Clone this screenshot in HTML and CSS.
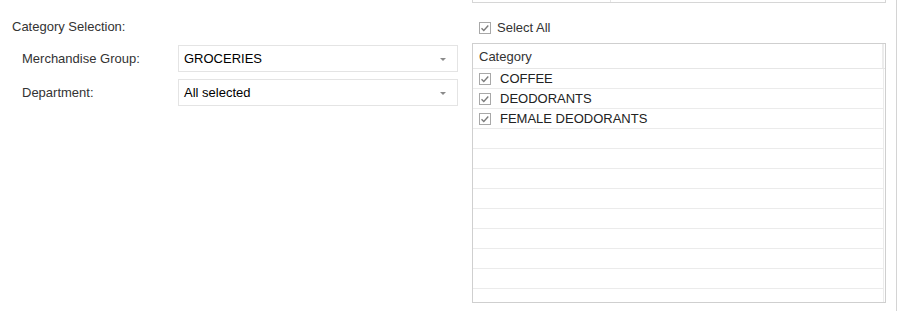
FILE: index.html
```html
<!DOCTYPE html>
<html>
<head>
<meta charset="utf-8">
<link rel="stylesheet" href="styles.css">
</head>
<body>
<div class="page">
  <section class="left">
    <div class="section-title">Category Selection:</div>
    <div class="field">
      <label class="field-label">Merchandise Group:</label>
      <div class="combo"><span class="combo-text">GROCERIES</span><span class="combo-arrow"></span></div>
    </div>
    <div class="field">
      <label class="field-label">Department:</label>
      <div class="combo"><span class="combo-text">All selected</span><span class="combo-arrow"></span></div>
    </div>
  </section>
  <section class="right">
    <div class="top-box"><div class="top-cell"></div><div class="top-cell last"></div></div>
    <div class="select-all">
      <span class="chk"><svg viewBox="0 0 12 12" width="12" height="12"><path d="M2.5 6.2 L4.8 8.4 L9.3 3.6" fill="none" stroke="#7b7b7b" stroke-width="1.4"/></svg></span>
      <span class="select-all-text">Select All</span>
    </div>
    <div class="grid">
      <div class="grid-header"><div class="col-head">Category</div></div>
      <div class="grid-body">
        <div class="row"><div class="cell"><span class="chk"><svg viewBox="0 0 12 12" width="12" height="12"><path d="M2.5 6.2 L4.8 8.4 L9.3 3.6" fill="none" stroke="#7b7b7b" stroke-width="1.4"/></svg></span><span class="cell-text">COFFEE</span></div></div>
        <div class="row"><div class="cell"><span class="chk"><svg viewBox="0 0 12 12" width="12" height="12"><path d="M2.5 6.2 L4.8 8.4 L9.3 3.6" fill="none" stroke="#7b7b7b" stroke-width="1.4"/></svg></span><span class="cell-text">DEODORANTS</span></div></div>
        <div class="row"><div class="cell"><span class="chk"><svg viewBox="0 0 12 12" width="12" height="12"><path d="M2.5 6.2 L4.8 8.4 L9.3 3.6" fill="none" stroke="#7b7b7b" stroke-width="1.4"/></svg></span><span class="cell-text">FEMALE DEODORANTS</span></div></div>
        <div class="row"><div class="cell"></div></div>
        <div class="row"><div class="cell"></div></div>
        <div class="row"><div class="cell"></div></div>
        <div class="row"><div class="cell"></div></div>
        <div class="row"><div class="cell"></div></div>
        <div class="row"><div class="cell"></div></div>
        <div class="row"><div class="cell"></div></div>
        <div class="row"><div class="cell"></div></div>
        <div class="row"><div class="cell"></div></div>
      </div>
    </div>
  </section>
  <div class="edge"></div>
</div>
</body>
</html>
```

FILE: styles.css
```css
html, body {
  margin: 0;
  padding: 0;
  background: #ffffff;
}
body {
  font-family: "Liberation Sans", Arial, sans-serif;
  font-size: 13px;
  color: #333333;
}
.page {
  display: flex;
  width: 902px;
  height: 311px;
  overflow: hidden;
}
.left {
  width: 472px;
  flex: none;
  padding-left: 12px;
  box-sizing: border-box;
}
.section-title {
  margin-top: 19px;
  line-height: 16px;
  height: 16px;
  color: #333333;
  margin-bottom: 10px;
}
.field {
  display: flex;
  align-items: center;
  padding-left: 10px;
  margin-bottom: 7px;
}
.field-label {
  width: 156px;
  flex: none;
  color: #333333;
}
.combo {
  width: 280px;
  height: 27px;
  box-sizing: border-box;
  border: 1px solid #e4e4e4;
  display: flex;
  align-items: center;
  padding-left: 5px;
  padding-right: 11px;
}
.combo-text {
  flex: 1;
  color: #000000;
}
.combo-arrow {
  width: 0;
  height: 0;
  border-left: 3px solid transparent;
  border-right: 3px solid transparent;
  border-top: 3px solid #8a8a8a;
  margin-top: 1px;
}
.right {
  width: 414px;
  flex: none;
  display: flex;
  flex-direction: column;
}
.top-box {
  height: 3px;
  box-sizing: border-box;
  border: 1px solid #d6d6d6;
  border-top: none;
  display: flex;
}
.top-cell {
  width: 137px;
  border-right: 1px solid #e6e6e6;
}
.top-cell.last {
  flex: 1;
  border-right: none;
}
.select-all {
  margin-top: 17px;
  height: 16px;
  display: flex;
  align-items: center;
  padding-left: 7px;
}
.select-all-text {
  margin-left: 6px;
  line-height: 16px;
  color: #333333;
}
.chk {
  width: 12px;
  height: 12px;
  box-sizing: border-box;
  border: 1px solid #a8a8a8;
  background: #ffffff;
  display: flex;
  flex: none;
}
.chk svg {
  display: block;
  margin: -1px;
}
.grid {
  margin-top: 7px;
  height: 260px;
  box-sizing: border-box;
  border: 1px solid #cfcfcf;
  overflow: hidden;
}
.grid-header {
  height: 25px;
  box-sizing: border-box;
  border-bottom: 1px solid #e6e6e6;
  display: flex;
}
.col-head {
  flex: 1;
  margin-right: 1px;
  border-right: 2px solid #ececec;
  padding-left: 6px;
  padding-top: 5px;
  line-height: 16px;
  color: #333333;
}
.row {
  height: 20px;
  box-sizing: border-box;
  border-bottom: 1px solid #ebebeb;
  margin-right: 1px;
  display: flex;
}
.cell {
  flex: 1;
  border-right: 1px solid #ececec;
  display: flex;
  align-items: center;
  padding-left: 6px;
}
.cell-text {
  margin-left: 9px;
  line-height: 19px;
  color: #222222;
}
.edge {
  margin-left: 10px;
  width: 0;
  height: 311px;
  border-left: 1px solid #d4d4d4;
}
```
